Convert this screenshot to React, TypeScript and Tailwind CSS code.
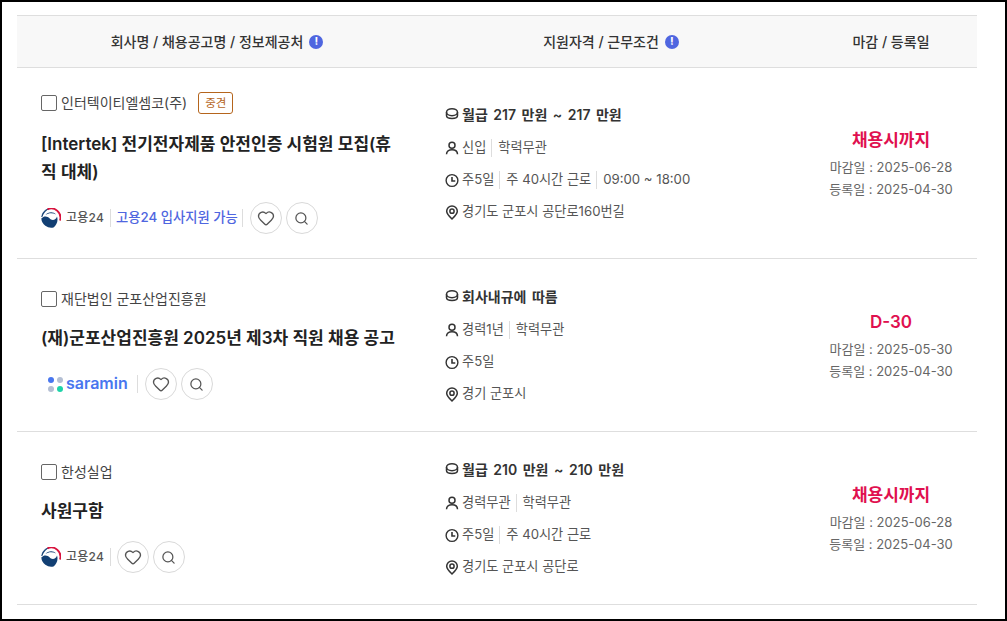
import { Heart, Search } from "lucide-react";

const jobs = [
  {
    company: "인터텍이티엘셈코(주)",
    badge: "중견",
    title: "[Intertek] 전기전자제품 안전인증 시험원 모집(휴직 대체)",
    source: "work24",
    apply: true,
    pay: "월급 217 만원 ~ 217 만원",
    career: ["신입", "학력무관"],
    work: ["주5일", "주 40시간 근로", "09:00 ~ 18:00"],
    place: "경기도 군포시 공단로160번길",
    due: "채용시까지",
    dueDate: "2025-06-28",
    regDate: "2025-04-30",
  },
  {
    company: "재단법인 군포산업진흥원",
    title: "(재)군포산업진흥원 2025년 제3차 직원 채용 공고",
    source: "saramin",
    pay: "회사내규에 따름",
    career: ["경력1년", "학력무관"],
    work: ["주5일"],
    place: "경기 군포시",
    due: "D-30",
    dueDate: "2025-05-30",
    regDate: "2025-04-30",
  },
  {
    company: "한성실업",
    title: "사원구함",
    source: "work24",
    pay: "월급 210 만원 ~ 210 만원",
    career: ["경력무관", "학력무관"],
    work: ["주5일", "주 40시간 근로"],
    place: "경기도 군포시 공단로",
    due: "채용시까지",
    dueDate: "2025-06-28",
    regDate: "2025-04-30",
  },
];

function InfoDot() {
  return (
    <span className="ml-[6px] inline-flex h-[14px] w-[14px] items-center justify-center rounded-full bg-[#4f66e0] text-[11px] font-bold leading-none text-white">
      !
    </span>
  );
}

function CoinIcon() {
  return (
    <svg width="14" height="14" viewBox="0 0 14 14" fill="none" stroke="#333" strokeWidth="1.5">
      <ellipse cx="7" cy="5.200" rx="5.500" ry="3.500" />
      <path d="M1.500 5.200v3.300c0 1.900 2.400 3 5.500 3s5.500-1.100 5.500-3V5.200" />
    </svg>
  );
}

function PersonIcon() {
  return (
    <svg width="14" height="14" viewBox="0 0 14 14" fill="none" stroke="#333" strokeWidth="1.500">
      <circle cx="7" cy="4.200" r="3" />
      <path d="M1.500 13.300c0-3 2.400-4.600 5.500-4.600s5.500 1.600 5.500 4.600" />
    </svg>
  );
}

function ClockIcon() {
  return (
    <svg width="15" height="15" viewBox="0 0 15 15" fill="none" stroke="#333" strokeWidth="1.500">
      <circle cx="7.500" cy="7.500" r="6.300" />
      <path d="M7.500 3.800V8H11" strokeWidth="1.700" />
    </svg>
  );
}

function PinIcon() {
  return (
    <svg width="14" height="15" viewBox="0 0 14 15" fill="none" stroke="#333" strokeWidth="1.500">
      <path d="M7 14C4.500 11.600 1.700 9 1.700 6.200a5.300 5.300 0 0 1 10.600 0C12.300 9 9.500 11.600 7 14Z" />
      <circle cx="7" cy="6.200" r="2.100" />
    </svg>
  );
}

function Work24Logo() {
  return (
    <span className="flex items-center gap-[5px]">
      <svg width="20" height="20" viewBox="0 0 20 20" fill="none">
        <path d="M.3 10.500C3 7.500 6.500 8 8.500 10.300C10.500 12.800 15 12.500 16 8.500C17.500 13 15.500 17.500 12.500 19.500A10 10 0 0 1 .3 10.500Z" fill="#123f73" />
        <path d="M.8 8.800A9.500 9.500 0 0 1 7.500 .8C4.500 2.500 2.500 5 .8 8.800Z" fill="#123f73" stroke="#123f73" strokeWidth=".8" />
        <path d="M4.500 7C7 3.500 12.500 3.200 15 6.500C12 4.800 7.500 4.800 4.500 7Z" fill="#123f73" />
        <path d="M6.500 1.300A9.200 9.200 0 0 1 19 12.500" stroke="#d8123d" strokeWidth="1.900" />
      </svg>
      <span className="text-[12px] font-medium tracking-[0.2px] text-[#555]">고용24</span>
    </span>
  );
}

function SaraminLogo() {
  return (
    <span className="flex items-center gap-[3px] pl-[7px]">
      <span className="grid grid-cols-2 gap-[3px]">
        <span className="h-[6px] w-[6px] rounded-full bg-[#4876ef]" />
        <span className="h-[6px] w-[6px] rounded-full bg-[#b4bfd3]" />
        <span className="h-[6px] w-[6px] rounded-full bg-[#b4bfd3]" />
        <span className="h-[6px] w-[6px] rounded-full bg-[#1dd3a8]" />
      </span>
      <span className="pb-[2px] text-[16px] font-semibold leading-none text-[#4876ef]">saramin</span>
    </span>
  );
}

function Sep() {
  return <span className="ml-[5px] mr-[6px] h-[18px] w-px bg-[#dddddd]" />;
}

function RoundButton({ children }: { children: React.ReactNode }) {
  return (
    <button className="flex h-8 w-8 items-center justify-center rounded-full border border-[#d9d9d9] bg-white text-[#555]">
      {children}
    </button>
  );
}

function Line({ icon, items, bold }: { icon: React.ReactNode; items: string[]; bold?: boolean }) {
  return (
    <div className={`flex h-8 items-center ${bold ? "pb-[2px] text-[14px] font-semibold text-[#333] [word-spacing:2px]" : "pt-[2px] text-[13.2px] text-[#555]"}`}>
      <span className="mr-[3px] flex w-[14px] justify-center">{icon}</span>
      {items.map((t, i) => (
        <span key={t} className="flex items-center">
          {i > 0 && <Sep />}
          {t}
        </span>
      ))}
    </div>
  );
}

export default function App() {
  return (
    <div
      className="h-[621px] w-[1007px] overflow-hidden border-2 border-black bg-white pl-[15px] pt-[13px]"
      style={{ fontFamily: 'Inter, "Noto Sans CJK KR", sans-serif' }}
    >
      <div className="w-[960px]">
        <div className="grid h-[53px] grid-cols-[400px_388px_172px] items-center border-y border-[#dedede] bg-[#f8f8f8] text-[14px] font-medium text-[#333]">
          <div className="flex items-center justify-center">회사명 / 채용공고명 / 정보제공처<InfoDot /></div>
          <div className="flex items-center justify-center">지원자격 / 근무조건<InfoDot /></div>
          <div className="text-center">마감 / 등록일</div>
        </div>

        {jobs.map((job) => (
          <div
            key={job.company}
            className="grid min-h-[173px] grid-cols-[400px_388px_172px] items-center border-b border-[#dedede]"
          >
            <div className="flex flex-col gap-4 py-6 pl-6 pr-[22px]">
              <div className="flex items-center text-[14px] leading-[18px] text-[#444]">
                <span className="mr-1 h-4 w-4 rounded-[2px] border border-[#666]" />
                {job.company}
                {job.badge && (
                  <span className="ml-[11px] flex h-[22px] items-center rounded-[3px] border border-[#b5651d] px-[6px] text-[11.5px] text-[#b5651d]">
                    {job.badge}
                  </span>
                )}
              </div>
              <div className="text-[17px] font-semibold leading-7 text-[#222]">{job.title}</div>
              <div className="flex items-center">
                {job.source === "work24" ? <Work24Logo /> : <SaraminLogo />}
                <span className={`${job.source === "saramin" ? "ml-[9px] mr-[7px]" : "mx-[6px]"} h-[18px] w-px bg-[#dddddd]`} />
                {job.apply && (
                  <>
                    <span className="-ml-px text-[13.3px] font-medium text-[#4f66e0]">고용24 입사지원 가능</span>
                    <span className="ml-[4px] mr-[7px] h-[18px] w-px bg-[#dddddd]" />
                  </>
                )}
                <span className="flex gap-1">
                  <RoundButton><Heart size={18} strokeWidth={1.8} /></RoundButton>
                  <RoundButton><Search size={15} strokeWidth={2} /></RoundButton>
                </span>
              </div>
            </div>

            <div className="pl-[28px]">
              <Line icon={<CoinIcon />} items={[job.pay]} bold />
              <Line icon={<PersonIcon />} items={job.career} />
              <Line icon={<ClockIcon />} items={job.work} />
              <Line icon={<PinIcon />} items={[job.place]} />
            </div>

            <div className="pt-[2px] text-center text-[13px] leading-[22px] text-[#666]">
              <div className="mb-[5px] text-[17px] font-semibold text-[#e0104f]">{job.due}</div>
              <div>마감일 : {job.dueDate}</div>
              <div>등록일 : {job.regDate}</div>
            </div>
          </div>
        ))}
      </div>
    </div>
  );
}
